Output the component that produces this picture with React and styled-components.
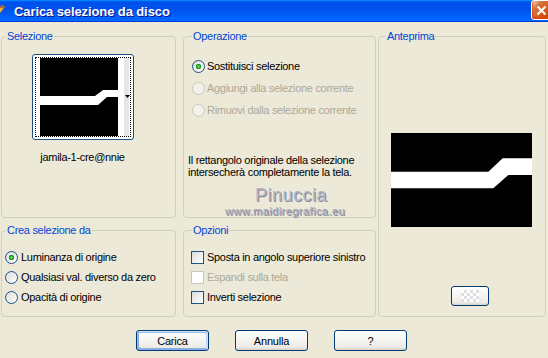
import React from "react";
import styled, { createGlobalStyle } from "styled-components";

const GlobalStyle = createGlobalStyle`
  html, body {
    margin: 0;
    padding: 0;
    background: #ece9d8;
  }
  body {
    font-family: "Liberation Sans", Arial, sans-serif;
    font-size: 11px;
    color: #000;
  }
`;

const Window = styled.div`
  position: relative;
  width: 548px;
  height: 358px;
  overflow: hidden;
  background: #ece9d8;
  letter-spacing: -0.3px;
`;

const TitleBar = styled.div`
  display: flex;
  align-items: center;
  height: 22px;
  background: linear-gradient(
    180deg,
    #0997ff 0%,
    #0053ee 8%,
    #0050ee 40%,
    #0066ff 88%,
    #0066ff 93%,
    #005bff 95%,
    #003dd7 96%,
    #003dd7 100%
  );
  color: #fff;
`;

const TitleIcon = styled.svg`
  flex: none;
  margin-left: -10px;
`;

const TitleText = styled.span`
  margin-left: 8px;
  font: bold 13px "Liberation Sans", Arial, sans-serif;
  letter-spacing: -0.1px;
  text-shadow: 1px 1px #0f1089;
`;

const CloseButton = styled.div`
  margin-left: auto;
  margin-right: -4px;
  align-self: flex-start;
  width: 21px;
  height: 20px;
  box-sizing: border-box;
  border: 1px solid #fff;
  border-radius: 3px;
  display: flex;
  align-items: center;
  justify-content: center;
  background: radial-gradient(
    circle at 90% 90%,
    #cc4600 0%,
    #dc6527 55%,
    #cd7546 70%,
    #ffccb2 90%,
    #fff 100%
  );
  box-shadow: inset 0 -1px 2px 1px #da4600;
`;

const Panels = styled.div`
  display: grid;
  grid-template-columns: 175px 200px 170px;
  grid-template-rows: 182px 87px;
  row-gap: 12px;
  padding: 14px 0 0 1px;
`;

const Group = styled.div`
  position: relative;
  box-sizing: border-box;
  margin-left: ${(p) => p.$inset || 0}px;
  grid-row: ${(p) => p.$rows || "auto"};
  grid-column: ${(p) => p.$col};
  border: 1px solid #d0d0bf;
  border-radius: 4px;
`;

const Legend = styled.span`
  position: absolute;
  top: -8px;
  left: ${(p) => p.$x}px;
  padding: 0 1px;
  background: #ece9d8;
  color: #0046d5;
  line-height: 14px;
  white-space: nowrap;
`;

const ThumbColumn = styled.div`
  display: flex;
  flex-direction: column;
  align-items: center;
  padding: 17px 12px 0 0;
`;

const ThumbFrame = styled.div`
  width: 102px;
  height: 86px;
  box-sizing: border-box;
  padding: 2px;
  border: 1px solid #1c5180;
  border-radius: 3px;
  background: #fff;
`;

const ThumbFocus = styled.div`
  height: 100%;
  box-sizing: border-box;
  border: 1px dotted #000;
  display: flex;
`;

const Caption = styled.div`
  margin-top: 11px;
  line-height: 13px;
`;

const OptionList = styled.div`
  display: flex;
  flex-direction: column;
  padding: ${(p) => p.$top}px 0 0 ${(p) => p.$left}px;
`;

const OptionRow = styled.div`
  display: flex;
  align-items: center;
  gap: ${(p) => p.$gap || 3}px;
  height: ${(p) => p.$h}px;
  color: ${(p) => (p.$disabled ? "#aca899" : "#000")};
  white-space: nowrap;
`;

const boxFill = "linear-gradient(135deg, #dcdcd7 0%, #ffffff 100%)";

const Radio = styled.span`
  flex: none;
  width: 13px;
  height: 13px;
  box-sizing: border-box;
  border-radius: 50%;
  border: 1px solid ${(p) => (p.$disabled ? "#cac8bb" : "#1c5180")};
  background: ${(p) =>
    p.$checked
      ? `radial-gradient(circle at 50% 50%, #7be37b 0, #2db42d 1.5px, #1a8a1a 2.5px, transparent 3px), ${boxFill}`
      : p.$disabled
      ? "#f3f2ea"
      : boxFill};
`;

const Check = styled.span`
  flex: none;
  width: 13px;
  height: 13px;
  box-sizing: border-box;
  border: 1px solid ${(p) => (p.$disabled ? "#cac8bb" : "#1c5180")};
  background: ${(p) => (p.$disabled ? "#fff" : boxFill)};
`;

const Note = styled.p`
  margin: 0;
  padding: 33px 0 0 4px;
  line-height: 12px;
`;

const PreviewBody = styled.div`
  display: flex;
  flex-direction: column;
  align-items: flex-start;
  padding: 96px 0 0 12px;
`;

const SwatchButton = styled.div`
  margin: 59px 0 0 60px;
  width: 38px;
  height: 20px;
  box-sizing: border-box;
  border: 1px solid #003c74;
  border-radius: 3px;
  background: linear-gradient(180deg, #fff 0%, #ecebe6 86%, #d6d0c5 100%);
  display: flex;
  align-items: center;
  justify-content: center;
`;

const ButtonRow = styled.div`
  display: flex;
  justify-content: center;
  gap: 26px;
  padding: 13px 5px 0 0;
`;

const DialogButton = styled.button`
  width: 73px;
  height: 21px;
  box-sizing: border-box;
  padding: 0;
  border: 1px solid #003c74;
  border-radius: 3px;
  background: linear-gradient(180deg, #fff 0%, #ecebe6 86%, #d6d0c5 100%);
  font: 11px "Liberation Sans", Arial, sans-serif;
  letter-spacing: -0.2px;
  color: #000;
  box-shadow: ${(p) =>
    p.$default
      ? "inset -1px 1px #cee7ff, inset 1px 2px #98b8ea, inset -2px 2px #bcd4f6, inset 1px -1px #89ade4, inset 2px -2px #89ade4"
      : "none"};
`;

const Watermark = styled.div`
  position: absolute;
  left: 215px;
  top: 185px;
  width: 140px;
  text-align: center;
  pointer-events: none;
`;

const MarkName = styled.div`
  padding-left: 12px;
  font: 18px "Liberation Sans", Arial, sans-serif;
  line-height: 20px;
  letter-spacing: 0.5px;
  color: #b4b4c4;
  text-shadow: 1px 1px 0 #85859a;
`;

const MarkSite = styled.div`
  font: 11px "Liberation Sans", Arial, sans-serif;
  line-height: 13px;
  letter-spacing: 0.45px;
  color: #a4a4b4;
  text-shadow: 1px 1px 0 #85859a;
`;

function AppIcon() {
  return (
    <TitleIcon width="16" height="16" viewBox="0 0 16 16">
      <path d="M3 14 L12 2 L15 4 L6 15 Z" fill="#f0b030" />
      <path d="M12 2 L15 4 L13 6 L10 4 Z" fill="#c05a20" />
      <path d="M3 14 L5 11 L7 13 L6 15 Z" fill="#7a3a10" />
    </TitleIcon>
  );
}

function CloseIcon() {
  return (
    <svg width="11" height="11" viewBox="0 0 11 11">
      <path d="M1.5 1.5 L9.5 9.5 M9.5 1.5 L1.5 9.5" stroke="#fff" strokeWidth="2" />
    </svg>
  );
}

function ThumbImage() {
  return (
    <svg width="94" height="78" viewBox="0 0 94 78">
      <rect width="94" height="78" fill="#fff" />
      <rect x="4" width="78" height="78" fill="#000" />
      <polygon points="4,38 59,38 67,32 82,32 82,39 71,39 62,47 4,47" fill="#fff" />
      <rect x="88" width="5" height="78" fill="#e6e6e6" />
      <polygon points="89,37 94,37 91.5,40" fill="#000" />
    </svg>
  );
}

function PreviewImage() {
  return (
    <svg width="141" height="94" viewBox="0 0 141 94">
      <rect width="141" height="94" fill="#000" />
      <polygon
        points="0,38.7 97.3,38.7 111.7,25.3 141,25.3 141,42 117.3,42 102.3,55.3 0,55.3"
        fill="#fff"
      />
    </svg>
  );
}

function SwatchIcon() {
  const cells = [];
  for (let r = 0; r < 4; r++) {
    for (let c = 0; c < 6; c++) {
      cells.push(
        <rect
          key={`${r}-${c}`}
          x={c * 3}
          y={r * 3}
          width="3"
          height="3"
          fill={(r + c) % 2 ? "#dedede" : "#ffffff"}
        />
      );
    }
  }
  return (
    <svg width="18" height="12" viewBox="0 0 18 12">
      {cells}
    </svg>
  );
}

export default function App() {
  return (
    <Window>
      <GlobalStyle />
      <TitleBar>
        <AppIcon />
        <TitleText>Carica selezione da disco</TitleText>
        <CloseButton>
          <CloseIcon />
        </CloseButton>
      </TitleBar>

      <Panels>
        <Group $col="1">
          <Legend $x={4}>Selezione</Legend>
          <ThumbColumn>
            <ThumbFrame>
              <ThumbFocus>
                <ThumbImage />
              </ThumbFocus>
            </ThumbFrame>
            <Caption>jamila-1-cre@nnie</Caption>
          </ThumbColumn>
        </Group>

        <Group $col="2" $inset={7}>
          <Legend $x={8}>Operazione</Legend>
          <OptionList $top={18} $left={8}>
            <OptionRow $h={22} $gap={2}>
              <Radio $checked />
              Sostituisci selezione
            </OptionRow>
            <OptionRow $h={22} $gap={2} $disabled>
              <Radio $disabled />
              Aggiungi alla selezione corrente
            </OptionRow>
            <OptionRow $h={22} $gap={2} $disabled>
              <Radio $disabled />
              Rimuovi dalla selezione corrente
            </OptionRow>
          </OptionList>
          <Note>
            Il rettangolo originale della selezione
            <br />
            intersecherà completamente la tela.
          </Note>
        </Group>

        <Group $col="3" $rows="1 / span 2" $inset={2}>
          <Legend $x={7}>Anteprima</Legend>
          <PreviewBody>
            <PreviewImage />
            <SwatchButton>
              <SwatchIcon />
            </SwatchButton>
          </PreviewBody>
        </Group>

        <Group $col="1">
          <Legend $x={4}>Crea selezione da</Legend>
          <OptionList $top={16} $left={3}>
            <OptionRow $h={20}>
              <Radio $checked />
              Luminanza di origine
            </OptionRow>
            <OptionRow $h={20}>
              <Radio />
              Qualsiasi val. diverso da zero
            </OptionRow>
            <OptionRow $h={20}>
              <Radio />
              Opacità di origine
            </OptionRow>
          </OptionList>
        </Group>

        <Group $col="2" $inset={7}>
          <Legend $x={8}>Opzioni</Legend>
          <OptionList $top={16} $left={7}>
            <OptionRow $h={20}>
              <Check />
              Sposta in angolo superiore sinistro
            </OptionRow>
            <OptionRow $h={20} $disabled>
              <Check $disabled />
              Espandi sulla tela
            </OptionRow>
            <OptionRow $h={20}>
              <Check />
              Inverti selezione
            </OptionRow>
          </OptionList>
        </Group>
      </Panels>

      <ButtonRow>
        <DialogButton $default>Carica</DialogButton>
        <DialogButton>Annulla</DialogButton>
        <DialogButton>?</DialogButton>
      </ButtonRow>

      <Watermark>
        <MarkName>Pinuccia</MarkName>
        <MarkSite>www.maidiregrafica.eu</MarkSite>
      </Watermark>
    </Window>
  );
}
